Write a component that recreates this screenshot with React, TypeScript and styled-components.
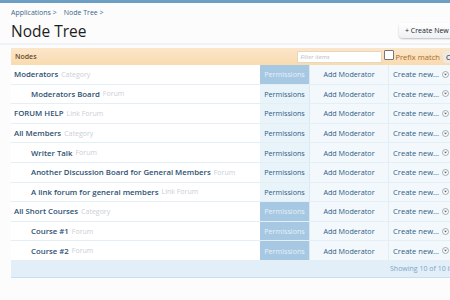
import { FC } from "react";
import styled, { createGlobalStyle } from "styled-components";

const GlobalStyle = createGlobalStyle`
  html, body {
    margin: 0;
    padding: 0;
    width: 450px;
    height: 300px;
    overflow: hidden;
    background: #fcfcfc;
    font-family: "Open Sans", "Noto Sans", sans-serif;
  }
`;

const Page = styled.div`
  border-top: 3px solid #6d9ec4;
  width: 470px;
`;

const TitleArea = styled.div`
  padding: 5px 0 0 11px;
  border-bottom: 2px solid #eef2f6;
`;

const Breadcrumb = styled.div`
  display: flex;
  gap: 7px;
  font-size: 7px;
  color: #3c6488;
  line-height: 10px;
`;

const TitleRow = styled.div`
  display: flex;
  align-items: center;
  justify-content: space-between;
  height: 25px;
`;

const Title = styled.h1`
  margin: 0;
  font-size: 15.5px;
  font-weight: 400;
  color: #1e1e1e;
  line-height: 20px;
`;

const CreateButton = styled.div`
  margin-top: -1px;
  height: 15px;
  width: 65px;
  padding-left: 6px;
  border-radius: 4px 0 0 4px;
  background: linear-gradient(#ffffff, #eef1f4);
  box-shadow: 0 1px 2px rgba(0, 0, 0, 0.25);
  font-size: 7px;
  line-height: 15px;
  color: #222;
  white-space: nowrap;
  overflow: hidden;
`;

const List = styled.div`
  margin: 3px 0 0 11px;
`;

const Header = styled.div`
  display: flex;
  align-items: center;
  height: 17px;
  background: linear-gradient(#fbe6c9, #f9dbb0);
  padding-left: 4px;
`;

const HeaderTitle = styled.div`
  flex: 1;
  font-size: 7px;
  font-weight: 600;
  color: #6b4a2b;
`;

const FilterInput = styled.div`
  width: 81px;
  height: 10px;
  background: #fff;
  border: 1px solid #e8d6bf;
  font-size: 6px;
  font-style: italic;
  color: #bbb;
  line-height: 10px;
  padding-left: 2px;
`;

const Check = styled.div`
  width: 8px;
  height: 8px;
  border: 1px solid #777;
  background: #fff;
  margin: -3px 1px 0 2px;
  border-radius: 1px;
`;

const PrefixLabel = styled.div`
  font-size: 7.6px;
  color: #a86a2c;
  margin-right: 3px;
  white-space: nowrap;
`;

const ClearButton = styled.div`
  width: 24px;
  height: 12px;
  border-radius: 3px;
  background: #eceae6;
  font-size: 7.6px;
  line-height: 12px;
  color: #222;
  padding-left: 3px;
  overflow: hidden;
`;

const Row = styled.div`
  display: grid;
  grid-template-columns: 249px 50px 79px 81px;
  height: 19.6px;
  border-bottom: 1px solid #e4eef5;
  box-sizing: border-box;
  background: #fff;
`;

const NameCell = styled.div<{ $indent: boolean }>`
  display: flex;
  align-items: center;
  padding-left: ${(p) => (p.$indent ? 20 : 3)}px;
  font-size: 7.8px;
  white-space: nowrap;
  overflow: hidden;
`;

const NodeName = styled.span`
  color: #2d5072;
  font-weight: 600;
`;

const NodeType = styled.span`
  color: #c9cfd4;
  font-size: 7px;
  margin-left: 3px;
`;

const PermCell = styled.div<{ $active: boolean }>`
  display: flex;
  align-items: center;
  justify-content: center;
  font-size: 7.2px;
  background: ${(p) => (p.$active ? "#a7c8e2" : "#e9f3fa")};
  color: ${(p) => (p.$active ? "#e6f0f8" : "#2f5d86")};
  border-right: 1px solid #dde9f2;
`;

const ActionCell = styled.div`
  display: flex;
  align-items: center;
  justify-content: center;
  font-size: 7.2px;
  color: #2f5d86;
  background: #f3f8fc;
  border-right: 1px solid #e2edf5;
  white-space: nowrap;
`;

const CreateCell = styled(ActionCell)`
  justify-content: flex-start;
  padding-left: 4px;
  gap: 3px;
  font-size: 7.6px;
`;

const Footer = styled.div`
  height: 16px;
  background: #e2eff9;
  border-bottom: 1px solid #c8dff0;
  font-size: 7px;
  color: #7ea5c5;
  line-height: 16px;
  padding-left: 379px;
  white-space: nowrap;
  overflow: hidden;
`;

const MenuIcon: FC = () => (
  <svg width="7" height="7" viewBox="0 0 8 8">
    <circle cx="4" cy="4" r="3.4" fill="#fff" stroke="#7d8a96" strokeWidth="0.8" />
    <path d="M2.3 3.2 L5.7 3.2 L4 5.2 Z" fill="#55626e" />
  </svg>
);

type Node = { name: string; type: string; child: boolean; active: boolean };

const nodes: Node[] = [
  { name: "Moderators", type: "Category", child: false, active: true },
  { name: "Moderators Board", type: "Forum", child: true, active: false },
  { name: "FORUM HELP", type: "Link Forum", child: false, active: false },
  { name: "All Members", type: "Category", child: false, active: false },
  { name: "Writer Talk", type: "Forum", child: true, active: false },
  { name: "Another Discussion Board for General Members", type: "Forum", child: true, active: false },
  { name: "A link forum for general members", type: "Link Forum", child: true, active: false },
  { name: "All Short Courses", type: "Category", child: false, active: true },
  { name: "Course #1", type: "Forum", child: true, active: true },
  { name: "Course #2", type: "Forum", child: true, active: true },
];

const App: FC = () => {
  return (
    <Page>
      <GlobalStyle />
      <TitleArea>
        <Breadcrumb>
          <span>Applications &gt;</span>
          <span>Node Tree &gt;</span>
        </Breadcrumb>
        <TitleRow>
          <Title>Node Tree</Title>
          <CreateButton>+ Create New Node</CreateButton>
        </TitleRow>
      </TitleArea>
      <List>
        <Header>
          <HeaderTitle>Nodes</HeaderTitle>
          <FilterInput>Filter items</FilterInput>
          <Check />
          <PrefixLabel>Prefix match</PrefixLabel>
          <ClearButton>Clear</ClearButton>
        </Header>
        {nodes.map((n) => (
          <Row key={n.name}>
            <NameCell $indent={n.child}>
              <NodeName>{n.name}</NodeName>
              <NodeType>{n.type}</NodeType>
            </NameCell>
            <PermCell $active={n.active}>Permissions</PermCell>
            <ActionCell>Add Moderator</ActionCell>
            <CreateCell>
              Create new...
              <MenuIcon />
            </CreateCell>
          </Row>
        ))}
        <Footer>Showing 10 of 10 items</Footer>
      </List>
    </Page>
  );
};

export default App;
